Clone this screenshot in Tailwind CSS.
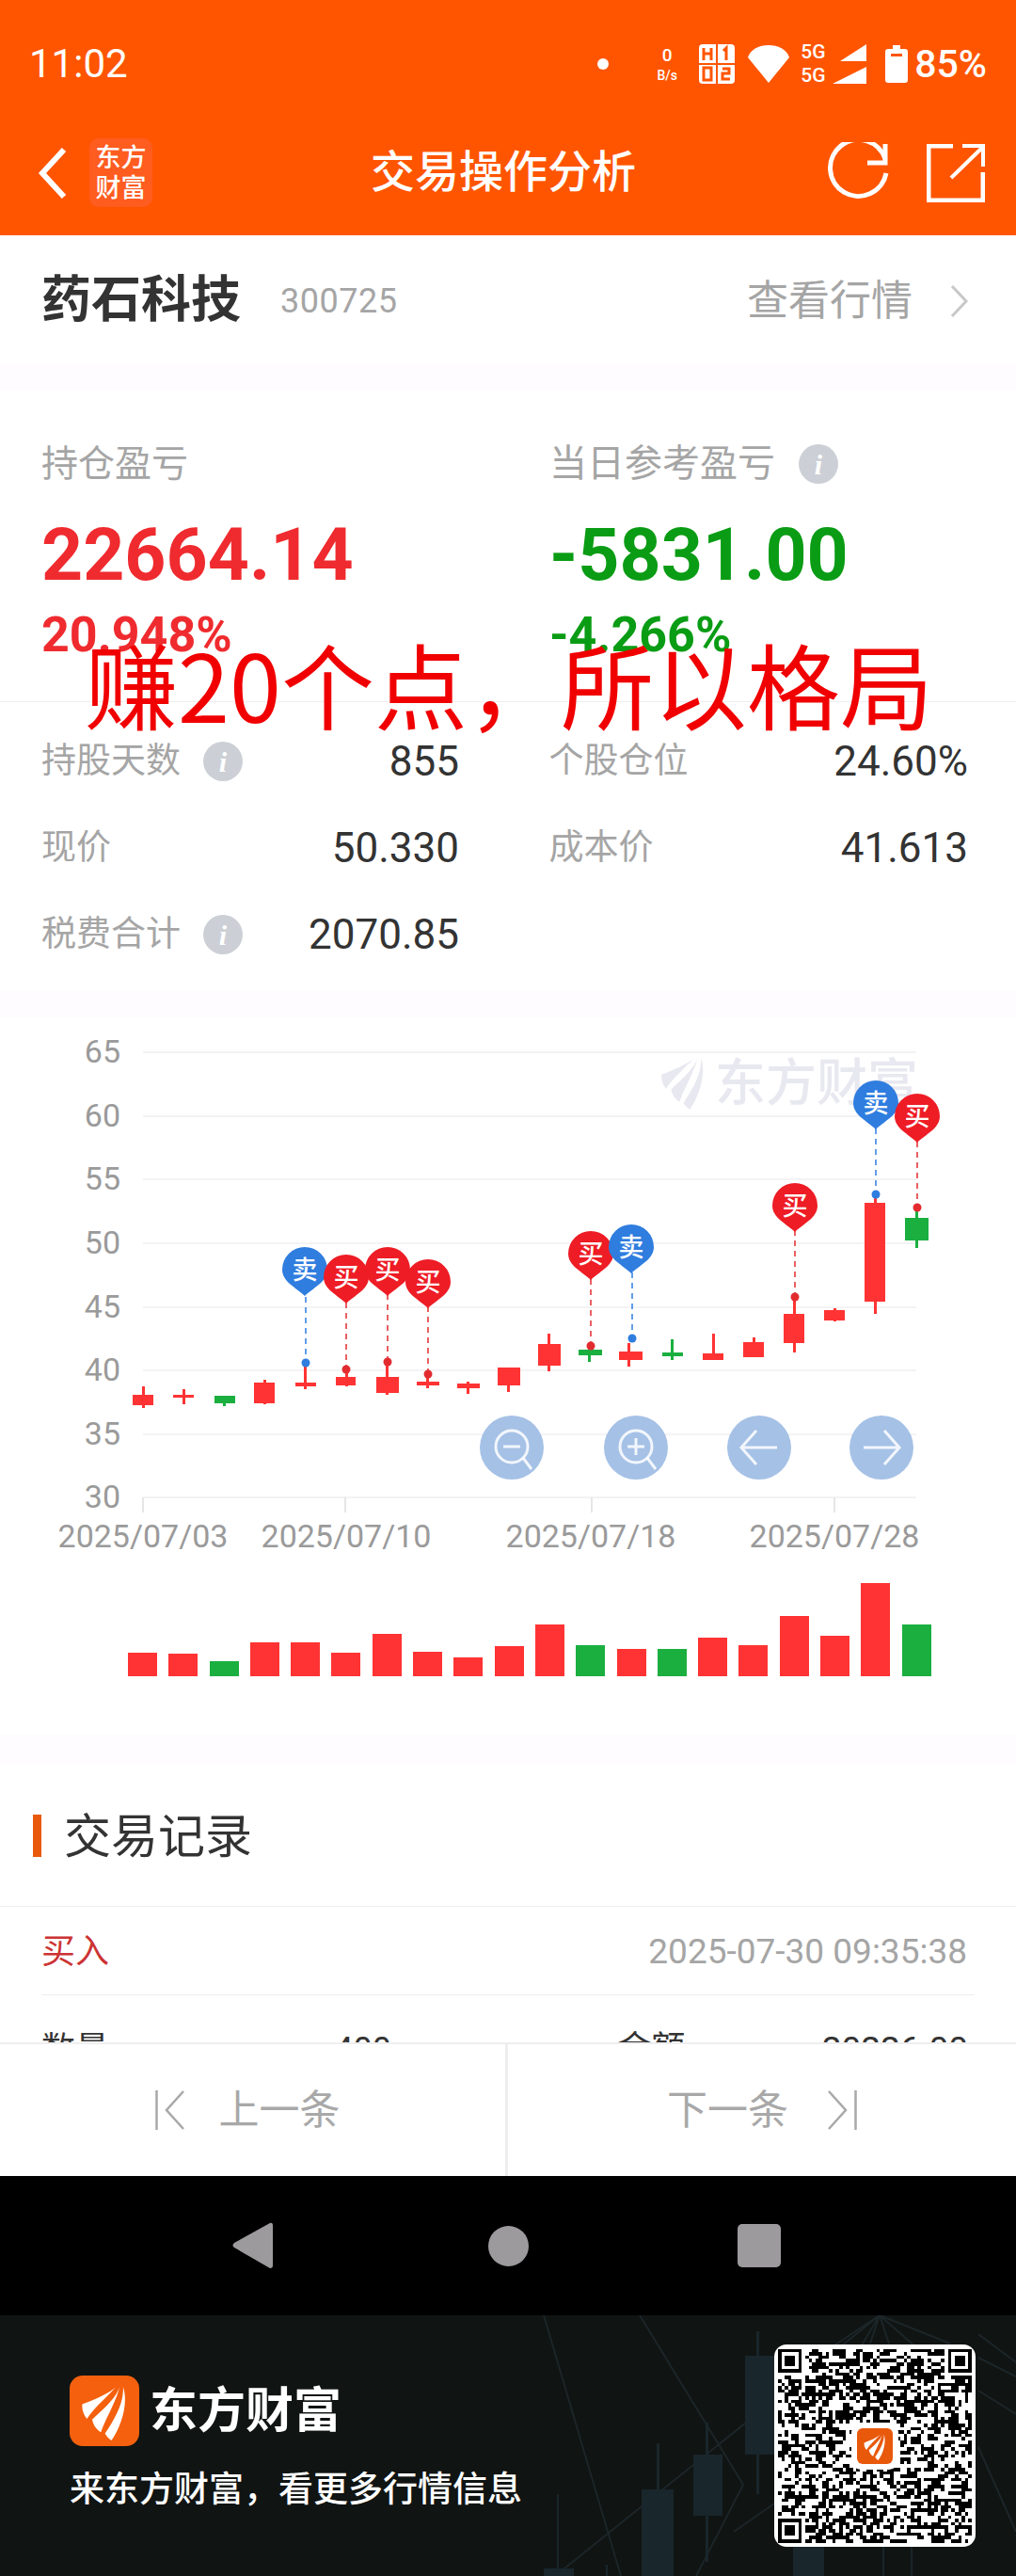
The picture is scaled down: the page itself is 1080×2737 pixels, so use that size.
<!DOCTYPE html>
<html lang="zh-CN">
<head>
    <meta charset="UTF-8" />
    <title>交易操作分析</title>
    <script src="https://cdn.jsdelivr.net/npm/@tailwindcss/browser@4"></script>
</head>
<body class="bg-white font-['Roboto','Noto_Sans_CJK_SC',sans-serif] w-[1080px] h-[2737px] overflow-hidden">

<svg class="hidden">
    <defs>
        <symbol id="feather" viewBox="0 0 100 100">
            <path d="M70 8C58 20 32 30 12 38C11 48 15 57 20 63C32 44 52 28 70 8Z"/>
            <path d="M76 8C70 28 48 46 29 64C31 74 37 82 44 86C52 62 70 34 76 8Z"/>
            <path d="M82 8C84 36 66 66 51 88C54 94 58 97 62 100C78 78 92 36 82 8Z"/>
        </symbol>
        <g id="pin"><path d="M-24 0a24 24 0 1 1 48 0c0 13-15 19-24 28c-9-9-24-15-24-28z"/></g>
    </defs>
</svg>

<!-- orange header -->
<header class="bg-[#ff5500] h-[250px] text-white relative">
    <div class="h-[137px] flex items-center pl-[31px] pr-[31px] pb-[1px]">
        <span class="text-[42px] leading-none">11:02</span>
        <div class="ml-auto flex items-center">
            <span class="w-[12px] h-[12px] rounded-full bg-white mr-[47px]"></span>
            <div class="w-[30px] flex flex-col items-center mr-[19px] leading-none">
                <span class="text-[19px] font-medium">0</span>
                <span class="text-[14px] font-medium mt-[5px]">B/s</span>
            </div>
            <svg class="w-[38px] h-[42px] mr-[13px]" viewBox="0 0 38 42">
                <rect x="0" y="0" width="38" height="42" rx="4" fill="#fff"/>
                <path d="M19 0v42M0 21h38" stroke="#ff5500" stroke-width="2"/>
                <path d="M5 4v13M13 4v13M5 10h8M26 7l3-3v13M5 25h8v13H5zM25 26h7v5h-7v6h8" fill="none" stroke="#ff5500" stroke-width="3"/>
            </svg>
            <svg class="w-[46px] h-[40px] mr-[11px]" viewBox="0 0 46 40"><path d="M1 13C4 4 13 0 23 0s19 4 22 13L23 40Z" fill="#fff"/></svg>
            <div class="w-[32px] flex flex-col text-[21px] leading-[25px] font-medium"><span>5G</span><span>5G</span></div>
            <svg class="w-[36px] h-[42px] ml-[2px] mr-[20px]" viewBox="0 0 36 42"><path d="M36 0v18H8ZM36 24v18H0Z" fill="#fff"/></svg>
            <svg class="w-[24px] h-[40px] mr-[7px]" viewBox="0 0 24 40"><path d="M8 0h8v4h5q3 0 3 3v30q0 3-3 3H3q-3 0-3-3V7q0-3 3-3h5Z" fill="#fff"/><rect x="6" y="9" width="12" height="3" fill="#ff5500"/></svg>
            <span class="text-[41px] leading-none font-medium">85%</span>
        </div>
    </div>
    <div class="h-[113px] flex items-center pl-[40px] pr-[33px] relative pb-[20px]">
        <svg class="w-[32px] h-[56px]" viewBox="0 0 32 56"><path d="M28 3 5 28l23 25" fill="none" stroke="#fff" stroke-width="6"/></svg>
        <div class="ml-[23px] w-[67px] h-[73px] rounded-[10px] bg-[#ff5c20] flex flex-col items-center justify-center text-[27px] leading-[32px] font-medium"><span>东方</span><span>财富</span></div>
        <h1 class="absolute left-[394px] top-[13px] text-[47px] leading-[66px] font-medium">交易操作分析</h1>
        <svg class="ml-auto w-[66px] h-[66px]" viewBox="0 0 66 66"><path d="M62 18A30 30 0 1 0 63 33" fill="none" stroke="#fff" stroke-width="5"/><path d="M62 2v20H43" fill="none" stroke="#fff" stroke-width="5"/></svg>
        <svg class="ml-[40px] w-[62px] h-[62px]" viewBox="0 0 62 62"><path d="M28 2H2v58h58V30" fill="none" stroke="#fff" stroke-width="5"/><path d="M26 36 60 3M38 2h22v22" fill="none" stroke="#fff" stroke-width="4"/></svg>
    </div>
</header>

<main class="h-[1920px] overflow-hidden relative">
    <!-- stock name -->
    <section class="h-[137px] flex items-center px-[44px] pt-[2px]">
        <h2 class="text-[53px] font-bold text-[#333]">药石科技</h2>
        <span class="ml-[42px] text-[36px] text-[#a5a5a5] tracking-[0.5px]">300725</span>
        <span class="ml-auto text-[44px] text-[#a5a5a5]">查看行情</span>
        <svg class="ml-[40px] mr-[6px] w-[20px] h-[36px]" viewBox="0 0 20 36"><path d="M2 2l15 16L2 34" fill="none" stroke="#c8c8c8" stroke-width="3"/></svg>
    </section>
    <div class="h-[28px] bg-[#fffcff]"></div>

    <!-- profit summary -->
    <section class="h-[637px] relative">
        <div class="flex pl-[44px] pt-[53px]">
            <div class="w-[540px]">
                <p class="h-[50px] leading-[50px] text-[39px] text-[#a5a5a5]">持仓盈亏</p>
                <p class="mt-[27px] h-[90px] leading-[90px] text-[77px] font-bold text-[#ef2b2f]">22664.14</p>
                <p class="mt-[10px] h-[60px] leading-[60px] text-[52px] font-bold text-[#ef2b2f]">20.948%</p>
            </div>
            <div>
                <p class="h-[50px] flex items-center text-[40px] text-[#a5a5a5]">当日参考盈亏<span class="ml-[25px] w-[42px] h-[42px] rounded-full bg-[#ccd0d6] text-white text-[30px] font-bold italic font-['Liberation_Serif',serif] flex items-center justify-center">i</span></p>
                <p class="mt-[27px] h-[90px] leading-[90px] text-[77px] font-bold text-[#0a9c14]">-5831.00</p>
                <p class="mt-[10px] h-[60px] leading-[60px] text-[52px] font-bold text-[#0a9c14]">-4.266%</p>
            </div>
        </div>
        <div class="mt-[40px] h-[1px] bg-[#eeeeee]"></div>
        <div class="mt-[17px] grid grid-cols-2 pl-[44px] pr-[51px] auto-rows-[92px] text-[#a5a5a5] text-[37px]">
            <div class="flex items-center w-[444px]">持股天数<span class="ml-[24px] w-[42px] h-[42px] rounded-full bg-[#ccd0d6] text-white text-[30px] font-bold italic font-['Liberation_Serif',serif] flex items-center justify-center">i</span><span class="ml-auto text-[44px] text-[#333]">855</span></div>
            <div class="flex items-center ml-[47px]">个股仓位<span class="ml-auto text-[44px] text-[#333]">24.60%</span></div>
            <div class="flex items-center w-[444px]">现价<span class="ml-auto text-[44px] text-[#333]">50.330</span></div>
            <div class="flex items-center ml-[47px]">成本价<span class="ml-auto text-[44px] text-[#333]">41.613</span></div>
            <div class="flex items-center w-[444px]">税费合计<span class="ml-[24px] w-[42px] h-[42px] rounded-full bg-[#ccd0d6] text-white text-[30px] font-bold italic font-['Liberation_Serif',serif] flex items-center justify-center">i</span><span class="ml-auto text-[44px] text-[#333]">2070.85</span></div>
        </div>
    </section>
    <div class="h-[30px] bg-[#fffcff]"></div>

    <!-- kline chart, svg y = page y - 1082 -->
    <section class="h-[761px]">
        <svg class="block w-[1080px] h-[578px]" viewBox="0 1082 1080 578">
            <path d="M152 1118H974M152 1186H974M152 1253H974M152 1321H974M152 1389H974M152 1456H974M152 1524H974M152 1591H974" stroke="#f3f3f5" stroke-width="2"/>
            <path d="M152 1591v16M367 1591v16M629 1591v16M887 1591v16" stroke="#e6e6e6" stroke-width="2"/>
            <g fill="#9a9a9a" font-size="34" text-anchor="end">
                <text x="128" y="1129">65</text><text x="128" y="1197">60</text><text x="128" y="1264">55</text><text x="128" y="1332">50</text>
                <text x="128" y="1400">45</text><text x="128" y="1467">40</text><text x="128" y="1535">35</text><text x="128" y="1602">30</text>
            </g>
            <g fill="#9a9a9a" font-size="34" text-anchor="middle">
                <text x="152" y="1644">2025/07/03</text><text x="368" y="1644">2025/07/10</text><text x="628" y="1644">2025/07/18</text><text x="887" y="1644">2025/07/28</text>
            </g>

            <!-- watermark -->
            <use href="#feather" x="696" y="1118" width="60" height="62" fill="#e8e8f0"/>
            <text x="760" y="1170" font-size="54" font-weight="500" fill="#e8e8f0">东方财富</text>

            <!-- candles -->
            <g fill="#ff3333">
                <rect x="151" y="1473" width="3" height="23"/><rect x="141" y="1482" width="22" height="11"/>
                <rect x="194" y="1476" width="3" height="16"/><rect x="184" y="1482" width="22" height="3"/>
                <rect x="280" y="1466" width="3" height="26"/><rect x="270" y="1469" width="22" height="22"/>
                <rect x="323" y="1452" width="3" height="24"/><rect x="314" y="1469" width="22" height="4"/>
                <rect x="367" y="1457" width="3" height="16"/><rect x="357" y="1463" width="21" height="9"/>
                <rect x="410" y="1450" width="3" height="32"/><rect x="400" y="1463" width="24" height="17"/>
                <rect x="453" y="1462" width="3" height="13"/><rect x="443" y="1468" width="24" height="4"/>
                <rect x="496" y="1468" width="3" height="13"/><rect x="486" y="1470" width="24" height="5"/>
                <rect x="539" y="1453" width="3" height="26"/><rect x="529" y="1453" width="24" height="19"/>
                <rect x="582" y="1417" width="3" height="40"/><rect x="572" y="1428" width="24" height="23"/>
                <rect x="667" y="1427" width="3" height="25"/><rect x="658" y="1436" width="25" height="9"/>
                <rect x="757" y="1417" width="3" height="28"/><rect x="747" y="1438" width="22" height="7"/>
                <rect x="800" y="1421" width="3" height="21"/><rect x="790" y="1426" width="22" height="16"/>
                <rect x="843" y="1378" width="3" height="59"/><rect x="833" y="1396" width="22" height="31"/>
                <rect x="886" y="1390" width="3" height="14"/><rect x="876" y="1392" width="22" height="11"/>
                <rect x="929" y="1273" width="3" height="123"/><rect x="919" y="1278" width="22" height="105"/>
            </g>
            <g fill="#1aaf3f">
                <rect x="237" y="1483" width="3" height="11"/><rect x="228" y="1483" width="22" height="8"/>
                <rect x="625" y="1434" width="3" height="13"/><rect x="615" y="1434" width="25" height="6"/>
                <rect x="713" y="1423" width="3" height="22"/><rect x="704" y="1437" width="22" height="4"/>
                <rect x="973" y="1287" width="3" height="39"/><rect x="962" y="1294" width="25" height="24"/>
            </g>

            <!-- trade markers -->
            <g font-size="27" font-weight="500" text-anchor="middle" stroke-width="1.500" stroke-dasharray="6 5">
                <path d="M325 1378v68" stroke="#2f7ddf"/><circle cx="325" cy="1448" r="4.500" fill="#2f7ddf" stroke="none"/>
                <use href="#pin" x="324" y="1349" fill="#2f7ddf"/><text x="324" y="1359" fill="#fff" stroke="none">卖</text>
                <path d="M368 1384v68" stroke="#e22b2f"/><circle cx="368" cy="1455" r="4.500" fill="#e22b2f" stroke="none"/>
                <use href="#pin" x="368" y="1357" fill="#ee1c25"/><text x="368" y="1367" fill="#fff" stroke="none">买</text>
                <path d="M412 1375v70" stroke="#e22b2f"/><circle cx="412" cy="1447" r="4.500" fill="#e22b2f" stroke="none"/>
                <use href="#pin" x="412" y="1349" fill="#ee1c25"/><text x="412" y="1359" fill="#fff" stroke="none">买</text>
                <path d="M455 1388v70" stroke="#e22b2f"/><circle cx="455" cy="1460" r="4.500" fill="#e22b2f" stroke="none"/>
                <use href="#pin" x="455" y="1362" fill="#ee1c25"/><text x="455" y="1372" fill="#fff" stroke="none">买</text>
                <path d="M628 1359v69" stroke="#e22b2f"/><circle cx="628" cy="1430" r="4.500" fill="#e22b2f" stroke="none"/>
                <use href="#pin" x="628" y="1332" fill="#ee1c25"/><text x="628" y="1342" fill="#fff" stroke="none">买</text>
                <path d="M672 1352v68" stroke="#2f7ddf"/><circle cx="672" cy="1422" r="4.500" fill="#2f7ddf" stroke="none"/>
                <use href="#pin" x="671" y="1325" fill="#2f7ddf"/><text x="671" y="1335" fill="#fff" stroke="none">卖</text>
                <path d="M845 1307v69" stroke="#e22b2f"/><circle cx="845" cy="1378" r="4.500" fill="#e22b2f" stroke="none"/>
                <use href="#pin" x="845" y="1281" fill="#ee1c25"/><text x="845" y="1291" fill="#fff" stroke="none">买</text>
                <path d="M931 1199v68" stroke="#2f7ddf"/><circle cx="931" cy="1269" r="4.500" fill="#2f7ddf" stroke="none"/>
                <use href="#pin" x="931" y="1172" fill="#2f7ddf"/><text x="931" y="1182" fill="#fff" stroke="none">卖</text>
                <path d="M975 1213v68" stroke="#e22b2f"/><circle cx="975" cy="1283" r="4.500" fill="#e22b2f" stroke="none"/>
                <use href="#pin" x="975" y="1186" fill="#ee1c25"/><text x="975" y="1196" fill="#fff" stroke="none">买</text>
            </g>

            <!-- zoom and pan buttons -->
            <g fill="#a5c1e6">
                <circle cx="544" cy="1538" r="34"/><circle cx="676" cy="1538" r="34"/><circle cx="807" cy="1538" r="34"/><circle cx="937" cy="1538" r="34"/>
            </g>
            <g fill="none" stroke="#fff" stroke-opacity="0.85" stroke-width="3">
                <circle cx="544" cy="1537" r="17"/><path d="M556 1549l9 12M535 1537h18"/>
                <circle cx="676" cy="1537" r="17"/><path d="M688 1549l9 12M667 1537h18M676 1528v18"/>
                <path d="M826 1538h-37M804 1520l-16 18 16 18"/>
                <path d="M918 1538h37M940 1520l16 18-16 18"/>
            </g>
        </svg>
        <div class="h-[121px] flex items-end gap-[12.3px] ml-[136px]">
            <div class="w-[31px] h-[25px] bg-[#ff3333]"></div>
            <div class="w-[31px] h-[24px] bg-[#ff3333]"></div>
            <div class="w-[31px] h-[16px] bg-[#1aaf3f]"></div>
            <div class="w-[31px] h-[36px] bg-[#ff3333]"></div>
            <div class="w-[31px] h-[36px] bg-[#ff3333]"></div>
            <div class="w-[31px] h-[25px] bg-[#ff3333]"></div>
            <div class="w-[31px] h-[45px] bg-[#ff3333]"></div>
            <div class="w-[31px] h-[26px] bg-[#ff3333]"></div>
            <div class="w-[31px] h-[20px] bg-[#ff3333]"></div>
            <div class="w-[31px] h-[32px] bg-[#ff3333]"></div>
            <div class="w-[31px] h-[55px] bg-[#ff3333]"></div>
            <div class="w-[31px] h-[33px] bg-[#1aaf3f]"></div>
            <div class="w-[31px] h-[29px] bg-[#ff3333]"></div>
            <div class="w-[31px] h-[29px] bg-[#1aaf3f]"></div>
            <div class="w-[31px] h-[41px] bg-[#ff3333]"></div>
            <div class="w-[31px] h-[33px] bg-[#ff3333]"></div>
            <div class="w-[31px] h-[64px] bg-[#ff3333]"></div>
            <div class="w-[31px] h-[43px] bg-[#ff3333]"></div>
            <div class="w-[31px] h-[99px] bg-[#ff3333]"></div>
            <div class="w-[31px] h-[55px] bg-[#1aaf3f]"></div>
        </div>
    </section>
    <div class="h-[32px] bg-[#fffcff]"></div>

    <!-- trade records -->
    <section>
        <div class="h-[151px] flex items-center border-b border-[#eeeeee] pl-[35px]">
            <span class="w-[9px] h-[45px] bg-[#e8590c]"></span>
            <h3 class="ml-[24px] text-[50px] text-[#333] pt-[5px]">交易记录</h3>
        </div>
        <div class="mx-[44px] h-[94px] flex items-center justify-between border-b border-[#eeeeee] pr-[8px] pt-[2px]">
            <span class="text-[36px] text-[#cc3333]">买入</span>
            <span class="text-[37px] text-[#a5a5a5]">2025-07-30 09:35:38</span>
        </div>
        <div class="grid grid-cols-2 pl-[44px] pr-[51px] h-[98px] pt-[18px] text-[36px] text-[#333] items-center">
            <div class="flex w-[372px] justify-between"><span>数量</span><span>400</span></div>
            <div class="flex ml-[120px] justify-between"><span>金额</span><span class="text-[37px]">20226.00</span></div>
        </div>
    </section>
</main>

<!-- prev / next -->
<nav class="h-[142px] flex border-t-[2px] border-[#eeeeee] bg-white text-[43px] text-[#a8a8a8]">
    <div class="w-[540px] flex items-center justify-center gap-[37px] border-r-[3px] border-[#eeeeee] pr-[11px]">
        <svg class="w-[31px] h-[42px]" viewBox="0 0 31 42"><path d="M1.500 0v42M30 1 12 21l18 20" fill="none" stroke="#a8a8a8" stroke-width="2.500"/></svg>
        <span>上一条</span>
    </div>
    <div class="flex-1 flex items-center justify-center gap-[42px]">
        <span>下一条</span>
        <svg class="w-[31px] h-[42px]" viewBox="0 0 31 42"><path d="M29.500 0v42M1 1l18 20L1 41" fill="none" stroke="#a8a8a8" stroke-width="2.500"/></svg>
    </div>
</nav>

<!-- android nav -->
<div class="h-[148px] bg-black flex items-center relative">
    <svg class="absolute left-[247px] top-[49px] w-[44px] h-[50px]" viewBox="0 0 44 50"><path d="M40 1q3-1 3 3v42q0 3-3 3L2 27q-3-2 0-5Z" fill="#9c9a9d"/></svg>
    <span class="absolute left-[519px] top-[53px] w-[43px] h-[43px] rounded-full bg-[#9c9a9d]"></span>
    <span class="absolute left-[784px] top-[51px] w-[46px] h-[46px] rounded-[5px] bg-[#9c9a9d]"></span>
</div>

<!-- share footer -->
<footer class="h-[277px] bg-[#101413] relative overflow-hidden">
    <svg class="absolute inset-0 w-[1080px] h-[277px]" viewBox="0 2460 1080 277">
        <g fill="none" stroke="#1c2528" stroke-width="2">
            <path d="M578 2460 660 2737M680 2460 790 2640M935 2460 590 2737M935 2460 860 2510M935 2460 905 2510M935 2460 925 2490M935 2460 945 2490M935 2460 975 2495M935 2460 1010 2490M1040 2505 1080 2525M1040 2540 1080 2565M1040 2600 1080 2690M1040 2480 1080 2510M790 2640 740 2737M823 2660 780 2690"/>
        </g>
        <g fill="#19262b">
            <rect x="804" y="2477" width="3" height="173"/><rect x="792" y="2503" width="31" height="105"/>
            <rect x="750" y="2574" width="3" height="148"/><rect x="737" y="2608" width="31" height="65"/>
            <rect x="698" y="2596" width="3" height="141"/><rect x="682" y="2645" width="34" height="92"/>
            <rect x="592" y="2650" width="2" height="87"/><rect x="578" y="2729" width="32" height="8"/>
            <rect x="843" y="2700" width="33" height="37"/>
            <rect x="644" y="2725" width="2" height="12"/><rect x="938" y="2700" width="2" height="37"/><rect x="968" y="2700" width="2" height="37"/>
        </g>
    </svg>
    <div class="absolute left-[74px] top-[64px] flex items-center">
        <div class="w-[74px] h-[75px] rounded-[14px] bg-[#f4600e] flex items-center justify-center">
            <svg class="w-[62px] h-[66px] fill-white"><use href="#feather"/></svg>
        </div>
        <span class="ml-[11px] text-[51px] leading-none font-bold text-white">东方财富</span>
    </div>
    <p class="absolute left-[74px] top-[162px] text-[37px] leading-[48px] font-medium text-white">来东方财富，看更多行情信息</p>
    <div class="absolute left-[823px] top-[31px] w-[214px] h-[215px] rounded-[13px] bg-white p-[4px]">
        <svg id="qr" class="w-[206px] h-[207px]" viewBox="0 0 57 57" shape-rendering="crispEdges"><path id="qrPath" fill="#000"/></svg>
        <div class="absolute left-[82px] top-[83px] w-[50px] h-[50px] rounded-[10px] bg-white flex items-center justify-center">
            <div class="w-[38px] h-[38px] rounded-[6px] bg-[#e8590c] flex items-center justify-center">
                <svg class="w-[30px] h-[30px] fill-white"><use href="#feather"/></svg>
            </div>
        </div>
    </div>
</footer>

<script>
    // fake qr modules, only the finder patterns are real
    const n = 57;
    let seed = 20250730;
    const rnd = () => { seed = (seed * 1664525 + 1013904223) >>> 0; return (seed >>> 16) / 65536; };
    const inFinder = (x, y, ox, oy) => x >= ox - 1 && x <= ox + 7 && y >= oy - 1 && y <= oy + 7;
    let d = "";
    const cell = (x, y) => { d += `M${x} ${y}h1v1h-1z`; };
    const finder = (ox, oy) => {
        for (let y = 0; y < 7; y++) for (let x = 0; x < 7; x++) {
            const ring = x === 0 || y === 0 || x === 6 || y === 6;
            const core = x >= 2 && x <= 4 && y >= 2 && y <= 4;
            if (ring || core) cell(ox + x, oy + y);
        }
    };
    for (let y = 0; y < n; y++) {
        let prev = false;
        for (let x = 0; x < n; x++) {
            if (inFinder(x, y, 0, 0) || inFinder(x, y, n - 7, 0) || inFinder(x, y, 0, n - 7)) continue;
            prev = rnd() < (prev ? 0.6 : 0.42);
            if (prev) cell(x, y);
        }
    }
    finder(0, 0); finder(n - 7, 0); finder(0, n - 7);
    document.getElementById("qrPath").setAttribute("d", d);
</script>

<!-- overlay caption added on the screenshot -->
<div class="absolute left-[90px] top-[667px] text-[99px] leading-[116px] text-[#f00000] whitespace-nowrap font-['Noto_Sans_CJK_SC',sans-serif]">赚20个点，所以格局</div>

</body>
</html>
